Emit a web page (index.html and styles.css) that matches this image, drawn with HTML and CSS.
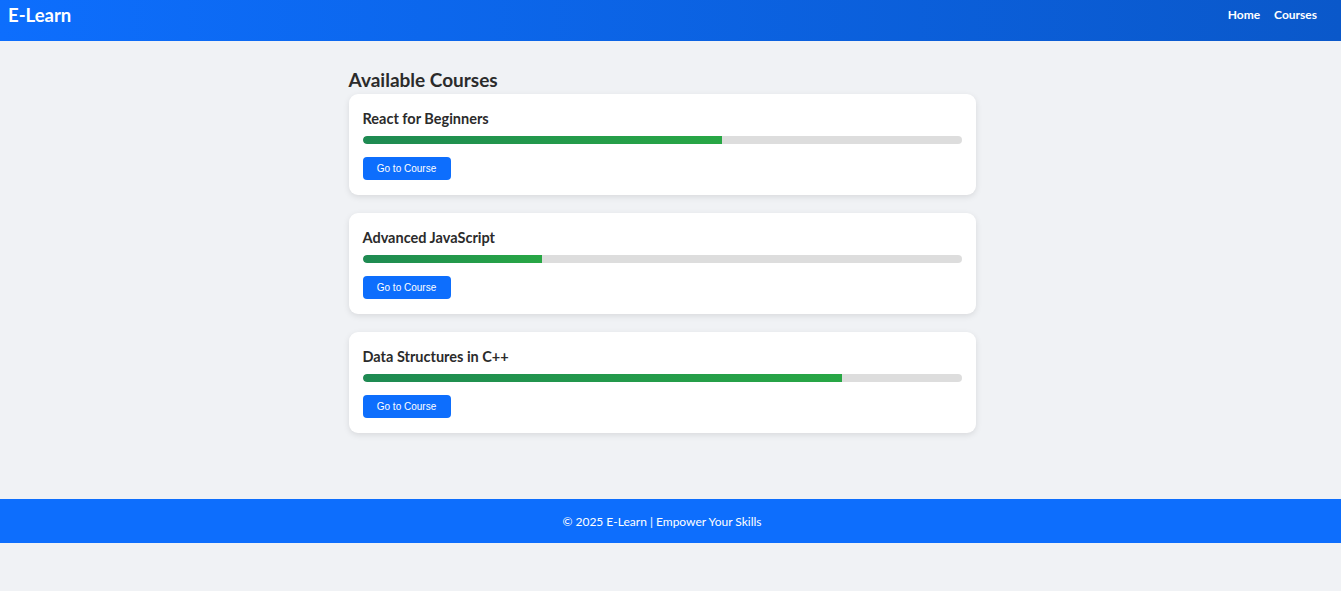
FILE: index.html
```html
<!DOCTYPE html>
<html lang="en">
<head>
<meta charset="utf-8">
<title>E-Learn</title>
<link rel="stylesheet" href="styles.css">
</head>
<body>
<header class="topbar">
  <div class="brand">E-Learn</div>
  <nav class="nav">
    <a href="#" class="nav-link">Home</a>
    <a href="#" class="nav-link">Courses</a>
  </nav>
</header>
<main class="main">
  <div class="container">
    <h2 class="page-title">Available Courses</h2>
    <div class="card">
      <h3 class="card-title">React for Beginners</h3>
      <div class="progress"><div class="progress-fill" style="width:60%"></div></div>
      <button class="btn">Go to Course</button>
    </div>
    <div class="card">
      <h3 class="card-title">Advanced JavaScript</h3>
      <div class="progress"><div class="progress-fill" style="width:30%"></div></div>
      <button class="btn">Go to Course</button>
    </div>
    <div class="card">
      <h3 class="card-title">Data Structures in C++</h3>
      <div class="progress"><div class="progress-fill" style="width:80%"></div></div>
      <button class="btn">Go to Course</button>
    </div>
  </div>
</main>
<footer class="footer">
  <p class="footer-text">© 2025 E-Learn | Empower Your Skills</p>
</footer>
</body>
</html>
```
FILE: styles.css
```css
* { box-sizing: border-box; }
html, body { margin: 0; padding: 0; }
body {
  background: #f0f2f5;
  font-family: "Lato", "Noto Sans", sans-serif;
  color: #2b2b2b;
}
.topbar {
  height: 41px;
  background: linear-gradient(90deg, #0d6efd, #0a58ca);
  color: #fff;
  display: flex;
  align-items: flex-start;
  justify-content: space-between;
  padding: 4px 24px 0 8px;
}
.brand {
  font-size: 18.5px;
  font-weight: 700;
  line-height: 22px;
}
.nav {
  display: flex;
  gap: 14px;
  padding-top: 1px;
}
.nav-link {
  color: #fff;
  text-decoration: none;
  font-size: 12px;
  font-weight: 700;
  line-height: 20px;
}
.main {
  padding: 25px 17px 66px 0;
}
.container {
  width: 627px;
  margin: 0 auto;
}
.page-title {
  margin: 0;
  font-size: 19px;
  font-weight: 700;
  line-height: 28px;
  color: #2b2b2b;
}
.card {
  background: #fff;
  border-radius: 9px;
  box-shadow: 0 2px 6px rgba(0,0,0,0.1);
  padding: 14px 14px 15px 14px;
  margin-bottom: 18px;
}
.card:last-child { margin-bottom: 0; }
.card-title {
  margin: 0 0 7px 0;
  font-size: 14.5px;
  font-weight: 700;
  line-height: 21px;
  color: #2b2b2b;
}
.progress {
  height: 8px;
  background: #dddddd;
  border-radius: 5px;
  overflow: hidden;
  margin-bottom: 13px;
}
.progress-fill {
  height: 100%;
  background: linear-gradient(90deg, #1e8a52, #28a745);
  border-radius: 5px 0 0 5px;
}
.btn {
  display: block;
  background: #0d6efd;
  color: #fff;
  border: none;
  border-radius: 4px;
  width: 88px;
  height: 23px;
  padding: 0;
  font-family: "Liberation Sans", Arial, sans-serif;
  font-size: 10px;
}
.footer {
  background: #0d6efd;
  color: #fff;
  height: 44px;
  display: flex;
  align-items: center;
  justify-content: center;
  padding-right: 17px;
}
.footer-text {
  margin: 0;
  font-size: 12px;
}
```
